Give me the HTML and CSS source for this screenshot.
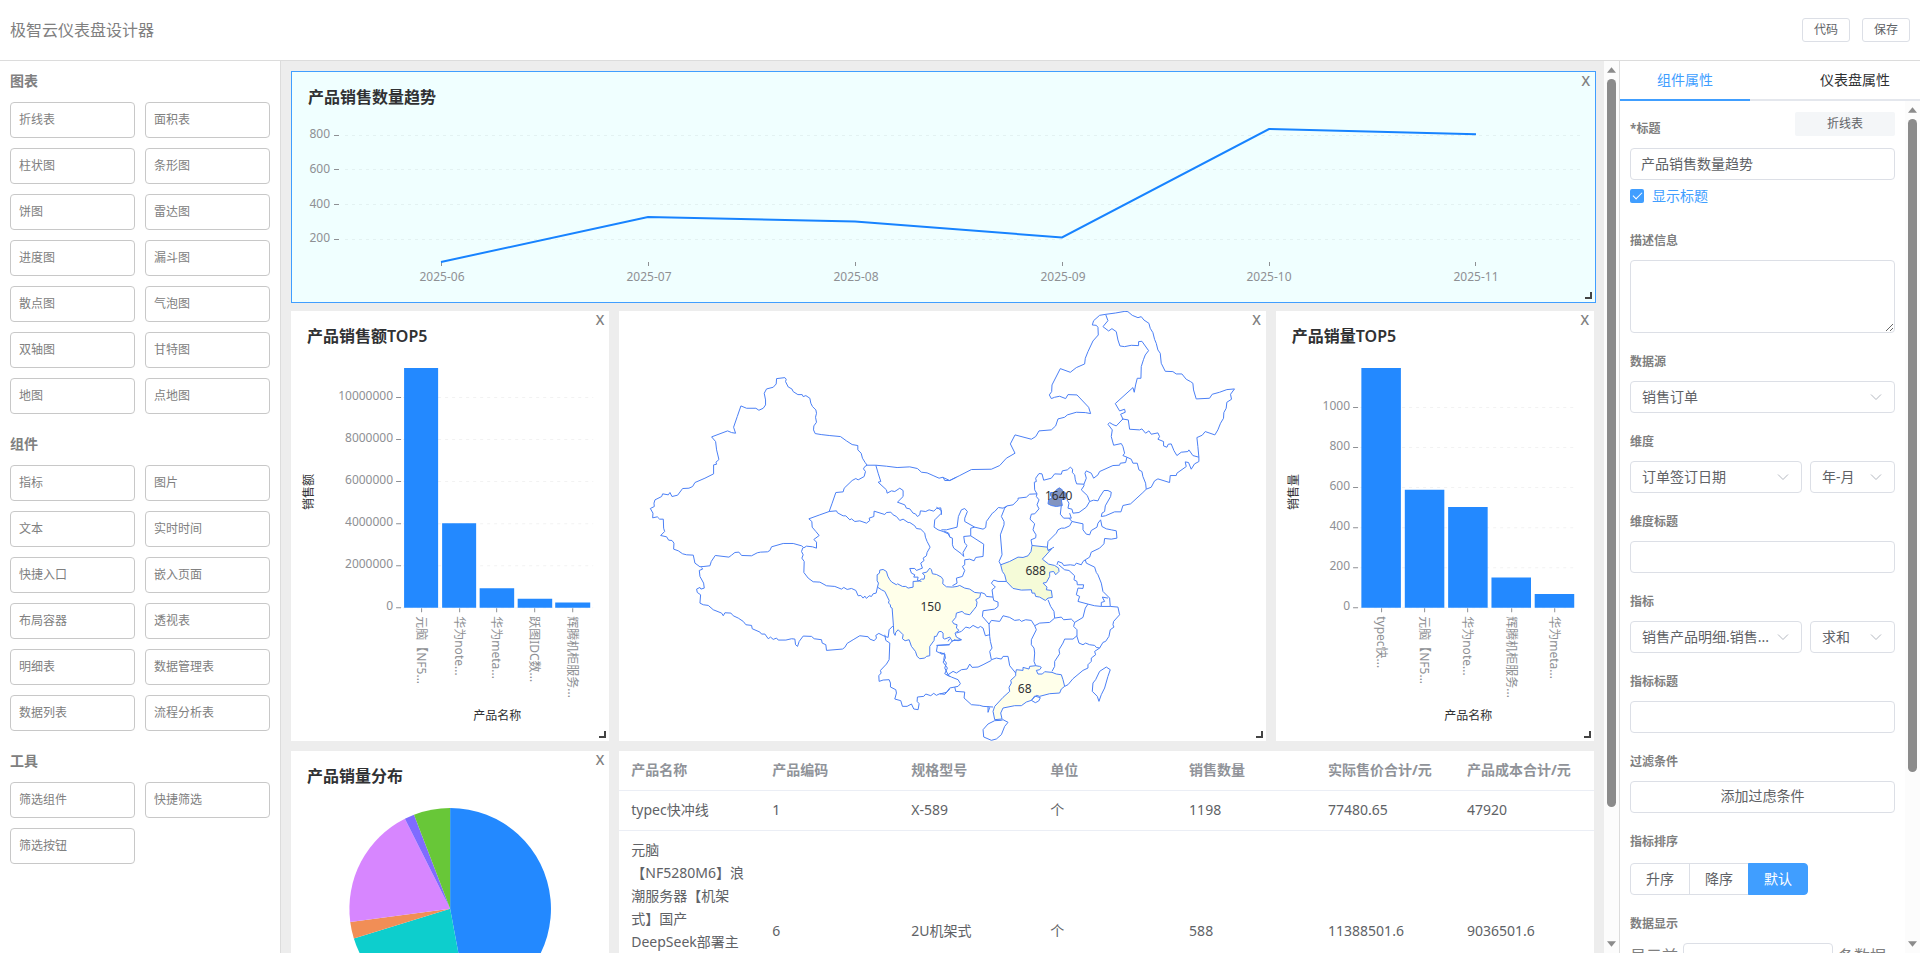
FILE: index.html
```html
<!DOCTYPE html>
<html lang="zh-CN">
<head>
<meta charset="utf-8">
<title>极智云仪表盘设计器</title>
<link rel="stylesheet" href="styles.css">
</head>
<body>
<header class="topbar">
  <h1 class="topbar-title">极智云仪表盘设计器</h1>
  <div class="topbar-actions">
    <button class="btn-small" type="button">代码</button>
    <button class="btn-small" type="button">保存</button>
  </div>
</header>
<div class="workspace">
  <nav class="palette">
    <h2 class="palette-title">图表</h2>
    <div class="palette-grid">
      <button type="button">折线表</button><button type="button">面积表</button>
      <button type="button">柱状图</button><button type="button">条形图</button>
      <button type="button">饼图</button><button type="button">雷达图</button>
      <button type="button">进度图</button><button type="button">漏斗图</button>
      <button type="button">散点图</button><button type="button">气泡图</button>
      <button type="button">双轴图</button><button type="button">甘特图</button>
      <button type="button">地图</button><button type="button">点地图</button>
    </div>
    <h2 class="palette-title">组件</h2>
    <div class="palette-grid">
      <button type="button">指标</button><button type="button">图片</button>
      <button type="button">文本</button><button type="button">实时时间</button>
      <button type="button">快捷入口</button><button type="button">嵌入页面</button>
      <button type="button">布局容器</button><button type="button">透视表</button>
      <button type="button">明细表</button><button type="button">数据管理表</button>
      <button type="button">数据列表</button><button type="button">流程分析表</button>
    </div>
    <h2 class="palette-title">工具</h2>
    <div class="palette-grid">
      <button type="button">筛选组件</button><button type="button">快捷筛选</button>
      <button type="button">筛选按钮</button>
    </div>
  </nav>

  <main class="board">
    <section class="widget widget-wide is-selected">
      <h2 class="widget-title">产品销售数量趋势</h2>
      <button class="widget-close" type="button" aria-label="删除">X</button>
      <svg class="chart" viewBox="292 114 1303 188">
        <g class="grid">
          <path d="M345 135.500H1580M345 169.500H1580M345 204.500H1580M345 239.500H1580"/>
        </g>
        <path class="tick" d="M334 135.500h5M334 169.500h5M334 204.500h5M334 239.500h5M441.500 262v4M648.500 262v4M855.500 262v4M1062.500 262v4M1269.500 262v4M1475.500 262v4"/>
        <g class="axis-label end">
          <text x="330" y="138">800</text><text x="330" y="173">600</text><text x="330" y="208">400</text><text x="330" y="242">200</text>
        </g>
        <g class="axis-label mid">
          <text x="442" y="281">2025-06</text><text x="649" y="281">2025-07</text><text x="856" y="281">2025-08</text>
          <text x="1063" y="281">2025-09</text><text x="1269" y="281">2025-10</text><text x="1476" y="281">2025-11</text>
        </g>
        <path class="trend" d="M441 262L648 217L855 221.500L1062 237.500L1269 129L1476 134.300"/>
      </svg>
      <span class="widget-resize"></span>
    </section>

    <section class="widget">
      <h2 class="widget-title">产品销售额TOP5</h2>
      <button class="widget-close" type="button" aria-label="删除">X</button>
      <svg class="chart" viewBox="291 353 318 388">
        <g class="grid"><path d="M403 397.500H593M403 439.500H593M403 481.500H593M403 523.500H593M403 565.500H593M403 607.500H593"/></g>
        <path class="tick" d="M396 397.500h5M396 439.500h5M396 481.500h5M396 523.500h5M396 565.500h5M396 607.500h5M421.500 608v4M459.500 608v4M496.500 608v4M534.500 608v4M572.500 608v4"/>
        <g class="bars">
          <path d="M404 368h34v239.500h-34zM442 523h34v84.500h-34zM479.500 588h34.500v19.500h-34.500zM517.500 598.500h34.500v9h-34.500zM555 602.300h35v5.200h-35z"/>
        </g>
        <g class="axis-label end">
          <text x="393" y="400">10000000</text><text x="393" y="442">8000000</text><text x="393" y="484">6000000</text>
          <text x="393" y="526">4000000</text><text x="393" y="568">2000000</text><text x="393" y="610">0</text>
        </g>
        <g class="axis-label">
          <text transform="translate(417 616) rotate(90)">元脑【NF5...</text>
          <text transform="translate(455 616) rotate(90)">华为note...</text>
          <text transform="translate(492 616) rotate(90)">华为meta...</text>
          <text transform="translate(530 616) rotate(90)">跃图IDC数...</text>
          <text transform="translate(568 616) rotate(90)">辉腾机柜服务...</text>
        </g>
        <g class="axis-name">
          <text transform="translate(313 492) rotate(-90)">销售额</text>
          <text x="497" y="720">产品名称</text>
        </g>
      </svg>
      <span class="widget-resize"></span>
    </section>

    <section class="widget">
      <button class="widget-close" type="button" aria-label="删除">X</button>
      <svg class="chart" viewBox="0 0 647 430">
        <g class="map" transform="translate(1 -11) scale(.33333)">
          <!-- 四川 -->
          <path class="lv1" d="M773 862L776 850 772 843 772 825 779 820 780 811 790 809 800 815 804 829 810 840 816 847 830 855 833 852 848 860 858 860 865 865 880 862 880 845 897 844 905 838 913 838 915 828 908 820 921 817 930 805 935 810 938 822 950 824 965 832 970 840 969 852 980 861 998 862 1012 860 1020 857 1035 865 1050 868 1065 878 1083 880 1080 893 1068 900 1072 907 1070 920 1062 930 1050 945 1035 942 1027 935 1010 940 1008 953 998 965 1002 972 1012 975 1010 985 1018 992 1006 1000 1010 1012 1025 1020 1015 1023 1003 1020 998 1025 990 1012 975 1018 970 1015 970 1000 964 995 957 996 950 1010 944 1010 943 1022 930 1040 930 1068 920 1070 915 1075 900 1077 892 1070 887 1055 875 1040 868 1020 856 1023 848 1017 850 1005 835 990 828 998 826 1007 822 1000 821 978 817 925 812 922 812 915 806 910 808 902 795 875 785 870z"/>
          <!-- 新疆 -->
          <path d="M742 496L736 488 728 475 724 460 714 450 714 437 697 434 680 423 662 410 630 407 604 404 586 401 581 390 582 378 590 367 587 352 590 340 588 330 578 320 573 310 570 295 558 287 550 290 547 284 534 284 520 275 516 267 505 261 497 245 499 238 495 233 470 236 469 252 460 262 440 267 433 280 437 300 437 315 430 325 417 331 408 325 380 325 363 318 352 350 341 382 347 400 335 398 323 393 275 411 287 425 290 450 297 479 288 487 290 493 281 495 281 522 255 535 225 548 218 560 207 565 188 566 173 586 156 590 150 578 145 585 128 582 125 590 105 600 102 610 103 620 91 626 99 640 98 654 112 651 119 658 130 658 131 685 134 695 122 707 140 711 146 721 156 722 162 730 161 748 175 753 188 762 200 765 220 766 225 790 240 801 252 800 270 798 274 785 286 767 327 772 335 766 345 758 357 757 365 767 395 768 412 759 422 757 443 756 450 752 455 741 490 731 520 731 545 738 552 744 560 739 578 741 590 745 590 727 582 719 598 707 588 695 577 682 576 665 567 657 600 645 628 635 637 610 648 578 670 576 673 565 697 542 708 536 715 540 733 530 737 515 731 507 735 500 742 496"/>
          <!-- 西藏 -->
          <path d="M245 803L248 808 238 812 240 830 251 850 253 865 243 868 240 863 230 868 232 878 242 885 240 910 250 915 265 917 280 930 305 940 310 948 315 939 333 940 340 948 355 955 370 965 378 975 395 977 397 987 420 997 425 1003 435 1003 445 1017 452 1012 460 1019 470 1015 475 1021 498 1021 515 1017 525 1018 527 1035 533 1040 538 1025 550 1009 575 1010 583 1017 605 1020 607 1030 618 1035 620 1052 668 1048 675 1043 682 1031 700 1020 720 1008 745 1011 750 1018 763 1023 770 1015 768 1007 777 1001 795 1010 805 1013 808 990 820 978"/>
          <!-- 青海 -->
          <path d="M549 744L545 755 550 765 546 775 553 785 552 818 565 835 580 846 600 847 620 858 645 860 665 868 672 863 682 869 695 866 708 872 715 888 723 887 730 895 735 889 740 896 748 888 755 890 760 882 769 880 773 862M628 635L650 633 653 639 670 648 678 648 690 660 695 657 705 665 720 663 740 670 750 662 748 655 762 650 763 634 795 644 800 638 813 637 820 645 830 650 840 662 850 658 865 668 870 668 885 678 890 686 903 688 915 700 917 712 922 725 931 742 922 758 920 768 910 775 913 782 903 790 908 805 890 812 885 806 870 806 875 820 885 825 882 832 895 832 893 842 905 845"/>
          <!-- 甘肃、内蒙古西段 -->
          <path d="M742 496L768 496 800 499 832 503 870 501 893 506 905 517 922 519 940 527 958 535 970 532 975 542 990 542 1010 532M768 496L775 520 783 545 775 547 800 570 802 580 815 573 825 575 840 565 850 572 850 590 833 607 855 615 860 625 870 627 880 640 887 642 893 650 900 645 902 633 918 635 928 630 942 634 950 626 963 624 965 640 945 660 943 682 955 690 970 695 985 702 990 710"/>
          <!-- 云南 -->
          <path d="M795 1005L798 1022 810 1030 808 1080 800 1093 782 1112 784 1120 777 1128 778 1145 790 1141 808 1140 812 1150 812 1162 828 1170 830 1180 825 1198 843 1203 848 1220 862 1220 875 1213 882 1228 895 1230 898 1212 892 1205 893 1192 912 1190 918 1183 933 1188 942 1181 950 1187 960 1182 975 1184 990 1168M990 1017L985 1025M990 1035L953 1037 950 1055 965 1062 975 1063 977 1075 970 1087 983 1105 975 1122 990 1130"/>
        </g>
        <g class="map" transform="translate(321 -11) scale(.33333)">
          <!-- 河南 -->
          <path class="lv2" d="M183 795L210 785 235 772 250 773 265 768 274 755 277 737 323 742 325 752 335 748 308 778 327 793 345 797 357 805 358 815 348 825 342 815 330 817 330 830 320 848 310 850 322 862 320 870 335 872 338 893 325 895 317 902 300 892 288 890 285 880 277 880 275 870 245 871 220 866 200 845 195 825 188 815z"/>
          <!-- 广东 -->
          <path class="lv1" d="M228 1120L230 1110 250 1112 250 1103 268 1108 270 1100 288 1098 300 1100 305 1103 300 1110 290 1112 295 1123 308 1123 315 1116 337 1118 350 1123 365 1125 370 1140 375 1160 365 1168 360 1180 330 1182 300 1190 290 1187 275 1202 260 1207 245 1218 225 1218 190 1225 183 1240 187 1258 165 1260 160 1235 165 1220 190 1193 210 1175 208 1163 215 1150 213 1142 228 1128z"/>
          <!-- 北京 -->
          <path class="lv3" d="M325 612L327 600 337 594 332 586 333 578 345 578 350 570 359 564 368 570 368 577 380 580 378 597 365 600 368 617 350 620 335 617z"/>
          <!-- 国界与东北 -->
          <path d="M10 533L30 542 60 527 95 509 155 508 180 497 200 475 226 460 212 432 226 405 275 418 288 410 298 393 335 390 348 378 355 357 375 352 383 345 410 337 437 338 453 341 447 322 412 285 385 284 378 296 360 289 345 292 335 296 329 285 336 275 337 255 362 206 392 217 410 203 435 192 437 175 445 155 460 123 476 105 475 82 470 76 458 75 462 62 480 46 498 43 528 39 556 34 565 35 578 46 595 53 605 50 613 60 628 70 632 85 640 98 645 118 650 130 655 150 662 160 665 190 677 214 700 215 710 222 727 222 740 238 753 245 760 250 762 270 770 297 810 295 818 283 840 277 862 269 885 267 873 283 876 298 862 307 860 325 853 338 852 355 843 370 835 390 826 405 797 395 788 406 772 413 775 440 778 472 778 485 765 492 755 508 747 488 737 486 740 500 712 520 710 527 692 527 690 548 655 537 645 543 635 562 620 568 610 578 573 612 550 617 544 636 525 636 497 648 485 650 487 640 495 635 497 618 513 590 515 577 505 572 493 572 480 592 475 603 462 601 450 605 440 622 418 638 400 640 397 628 385 625 388 610 382 600"/>
          <path d="M498 43L505 62 490 80 507 93 517 86 530 95 535 120 541 138 555 140 575 136 597 137 597 125 607 124 627 152 617 165 612 178 605 200 604 235 593 235 588 255 584 277 580 263 527 311 540 333 555 328 557 337 543 343 550 357 530 378 520 374 510 368 505 373 518 390 515 410 522 436 545 431 550 440 555 460 550 467 562 472M547 357L566 360 570 388 600 390 607 387 618 400 628 393 635 403 655 399 660 410 655 418 672 425 672 438 682 442 686 433 695 432 703 452 712 467 725 457 745 455 748 450 760 467 778 472M562 472L575 478 580 490 593 490 598 510 607 515 610 530 618 550 620 568M562 472L558 488 542 490 540 496 520 497 480 515 475 525 462 535 455 520 440 513 436 520 440 535 433 553 433 558 425 570 443 587 450 605"/>
          <!-- 华北 -->
          <path d="M433 553L411 552 407 540 405 525 398 518 399 508 392 502 383 510 368 513 365 523 345 522 335 535 312 541 307 522 298 521 288 535 290 545 284 547 285 570 292 582 290 590 298 600 292 615 298 627 285 642 275 643 271 658 285 672 280 690 289 705 288 714 274 720 277 737M323 742L325 725 350 700 355 690 365 685 375 685 390 678 397 665 388 655 372 655 362 643 365 617M390 640L395 655 388 655M203 618L220 615 235 600 235 595 260 592 270 583 292 582M203 618L195 625 185 650 193 665 193 675 182 705 187 765 178 785 183 795M203 618L190 625 176 623 165 635 158 640 140 665 138 683 130 688 105 682 75 665 75 655 83 635 75 626 65 630 56 650 52 682 20 690 5 690M13 694L27 700 30 712 38 715 38 735 42 745 65 762 72 770 70 758 82 737 75 730 72 710 93 708 93 685 105 682M93 708L132 733 130 770 108 773 103 783 90 778 75 780 75 795 68 800 75 812 68 830 50 835 52 850 38 858M-10 622L5 632 5 645"/>
          <!-- 华东 -->
          <path d="M397 665L430 672 430 690 440 703 450 705 455 692 472 682 475 670 483 660 487 680 500 687 515 690 530 693 532 715 515 718 495 716 493 732 480 745 455 757 450 772 437 780 440 790 465 802 470 818 475 825 485 850 490 875 510 895 512 920 485 920 485 908 495 905 488 892 505 895M352 795L355 785 368 790 372 797 392 795 405 797 410 790 425 795 430 785 437 780M357 795L375 810 388 812 405 828 403 840 412 845 413 855 432 855 430 866 415 865 410 885 420 890 415 905 445 913 465 918 485 920M343 742L325 752M512 920L535 922 540 945 522 965 520 975 523 982 512 990 508 1010 498 1025 490 1028 480 1045 470 1043 465 1037 450 1035 438 1030 430 1035 418 1030 412 1010 412 990 402 980 405 968 430 953 437 925 445 913M345 955L365 952 372 960 395 958 405 968M412 1008L400 1018 375 1018 370 1030 358 1050 360 1062 345 1085 345 1100 337 1115M480 1045L465 1055 468 1065 455 1075 455 1085 445 1095 445 1105 430 1112 400 1137 385 1155 375 1160M500 1102L512 1110 505 1130 495 1165 485 1185 478 1205 473 1190 458 1175 460 1150 468 1140 480 1115z"/>
          <!-- 华中、西南 -->
          <path d="M123 878L135 882 140 890 160 892 157 870 167 862 155 850 162 841 175 845 200 845M160 892L162 902 175 907 175 920 165 928 130 933 128 950 148 973 155 962 180 965 190 948 210 953 225 962 240 960 245 965 258 960 275 962 285 978 300 970 330 968 345 955M325 900L333 920 343 935 345 955M285 978L290 990 275 1020 275 1035 283 1045 285 1060 283 1085 288 1098M148 973L150 1010 152 1025 157 1045 150 1055 155 1080 170 1075 185 1078 190 1070 205 1070 210 1098 228 1120M150 1005L137 1008 130 985 122 980 115 985 100 977 90 985 78 982 65 995 50 1000M65 1020L38 1023 28 1035 -10 1037M15 1060L5 1063M0 1058L15 1063 12 1080 20 1090 15 1105 25 1125 40 1115 50 1120 65 1110 82 1108 90 1093 97 1103 115 1102 130 1095 155 1082M20 1125L35 1132 55 1140 62 1152 55 1160 45 1162 30 1165 20 1178 0 1183M45 1162L48 1175 75 1177 73 1195 95 1215 120 1217 130 1220 160 1222M145 1220v18l5 -15"/>
          <!-- 海南、港澳 -->
          <path d="M165 1263L185 1262 190 1260 205 1268 195 1280 185 1305 170 1318 155 1322 132 1312 130 1290 145 1273zM275 1202l10 -13 17 5 -5 10 -10 5z"/>
        </g>
        <g class="map-label">
          <text x="312" y="300">150</text><text x="417" y="264">688</text><text x="440" y="189">1640</text><text x="406" y="382">68</text>
        </g>
      </svg>
      <span class="widget-resize"></span>
    </section>

    <section class="widget">
      <h2 class="widget-title">产品销量TOP5</h2>
      <button class="widget-close" type="button" aria-label="删除">X</button>
      <svg class="chart" viewBox="1276 353 318 388">
        <g class="grid"><path d="M1360 407.500H1577M1360 447.500H1577M1360 487.500H1577M1360 527.500H1577M1360 567.500H1577M1360 607.500H1577"/></g>
        <path class="tick" d="M1353 407.500h5M1353 447.500h5M1353 487.500h5M1353 527.500h5M1353 567.500h5M1353 607.500h5M1381.500 608v4M1424.500 608v4M1467.500 608v4M1511.500 608v4M1554.500 608v4"/>
        <g class="bars">
          <path d="M1361.300 368h39.500v239.500h-39.500zM1404.700 489.700h39.500v117.800h-39.500zM1448 507h39.500v100.500h-39.500zM1491.300 577.300h39.500v30.200h-39.500zM1534.500 593.700h39.500v13.800h-39.500z"/>
        </g>
        <g class="axis-label end">
          <text x="1350" y="410">1000</text><text x="1350" y="450">800</text><text x="1350" y="490">600</text>
          <text x="1350" y="530">400</text><text x="1350" y="570">200</text><text x="1350" y="610">0</text>
        </g>
        <g class="axis-label">
          <text transform="translate(1377 616) rotate(90)">typec快...</text>
          <text transform="translate(1420 616) rotate(90)">元脑【NF5...</text>
          <text transform="translate(1463 616) rotate(90)">华为note...</text>
          <text transform="translate(1507 616) rotate(90)">辉腾机柜服务...</text>
          <text transform="translate(1550 616) rotate(90)">华为meta...</text>
        </g>
        <g class="axis-name">
          <text transform="translate(1298 492) rotate(-90)">销售量</text>
          <text x="1468" y="720">产品名称</text>
        </g>
      </svg>
      <span class="widget-resize"></span>
    </section>

    <section class="widget">
      <h2 class="widget-title">产品销量分布</h2>
      <button class="widget-close" type="button" aria-label="删除">X</button>
      <svg class="chart" viewBox="291 793 318 388">
        <g class="pie" transform="translate(450 908.700)">
          <path fill="#2389ff" d="M0 0V-100.700A100.700 100.700 0 0 1 18.500 99z"/>
          <path fill="#0dcecd" d="M0 0L18.500 99A100.700 100.700 0 0 1 -96.200 29.800z"/>
          <path fill="#f18e56" d="M0 0L-96.200 29.800A100.700 100.700 0 0 1 -99.800 13.100z"/>
          <path fill="#d786ff" d="M0 0L-99.800 13.100A100.700 100.700 0 0 1 -45.200 -90z"/>
          <path fill="#7f6bff" d="M0 0L-45.200 -90A100.700 100.700 0 0 1 -36.100 -94z"/>
          <path fill="#68c738" d="M0 0L-36.100 -94A100.700 100.700 0 0 1 0 -100.700z"/>
        </g>
      </svg>
    </section>

    <section class="widget widget-table">
      <table class="data-table">
        <thead>
          <tr><th class="col-name">产品名称</th><th>产品编码</th><th>规格型号</th><th>单位</th><th>销售数量</th><th>实际售价合计/元</th><th>产品成本合计/元</th></tr>
        </thead>
        <tbody>
          <tr><td>typec快冲线</td><td>1</td><td>X-589</td><td>个</td><td>1198</td><td>77480.65</td><td>47920</td></tr>
          <tr class="row-tall"><td>元脑<br>【NF5280M6】浪<br>潮服务器【机架<br>式】国产<br>DeepSeek部署主</td><td>6</td><td>2U机架式</td><td>个</td><td>588</td><td>11388501.6</td><td>9036501.6</td></tr>
        </tbody>
      </table>
    </section>
  </main>

  <div class="scrollbar" aria-hidden="true">
    <svg viewBox="0 0 10 6"><path d="M5 0L10 6H0z"/></svg>
    <div class="scroll-track board-thumb"><i></i></div>
    <svg viewBox="0 0 10 6"><path d="M0 0H10L5 6z"/></svg>
  </div>

  <aside class="inspector">
    <div class="tabs">
      <button class="tab is-active" type="button">组件属性</button>
      <button class="tab" type="button">仪表盘属性</button>
    </div>
    <div class="inspector-body">
      <form class="form">
        <div class="field field-first">
          <div class="field-head">
            <label class="field-label" for="f-title">*标题</label>
            <span class="tag">折线表</span>
          </div>
          <input class="control" id="f-title" type="text" value="产品销售数量趋势">
          <label class="check"><input type="checkbox" checked><span>显示标题</span></label>
        </div>
        <div class="field">
          <label class="field-label" for="f-desc">描述信息</label>
          <textarea class="control control-area" id="f-desc"></textarea>
        </div>
        <div class="field">
          <label class="field-label" for="f-source">数据源</label>
          <div class="select"><select class="control" id="f-source"><option>销售订单</option></select><svg viewBox="0 0 12 8"><path d="M1 1.500L6 6.500 11 1.500"/></svg></div>
        </div>
        <div class="field">
          <label class="field-label" for="f-dim">维度</label>
          <div class="pair">
            <div class="select"><select class="control" id="f-dim"><option>订单签订日期</option></select><svg viewBox="0 0 12 8"><path d="M1 1.500L6 6.500 11 1.500"/></svg></div>
            <div class="select select-short"><select class="control" aria-label="日期粒度"><option>年-月</option></select><svg viewBox="0 0 12 8"><path d="M1 1.500L6 6.500 11 1.500"/></svg></div>
          </div>
        </div>
        <div class="field">
          <label class="field-label" for="f-dimtitle">维度标题</label>
          <input class="control" id="f-dimtitle" type="text">
        </div>
        <div class="field">
          <label class="field-label" for="f-metric">指标</label>
          <div class="pair">
            <div class="select"><select class="control" id="f-metric"><option>销售产品明细.销售...</option></select><svg viewBox="0 0 12 8"><path d="M1 1.500L6 6.500 11 1.500"/></svg></div>
            <div class="select select-short"><select class="control" aria-label="汇总方式"><option>求和</option></select><svg viewBox="0 0 12 8"><path d="M1 1.500L6 6.500 11 1.500"/></svg></div>
          </div>
        </div>
        <div class="field">
          <label class="field-label" for="f-metrictitle">指标标题</label>
          <input class="control" id="f-metrictitle" type="text">
        </div>
        <div class="field">
          <span class="field-label">过滤条件</span>
          <button class="control control-button" type="button">添加过虑条件</button>
        </div>
        <div class="field">
          <span class="field-label">指标排序</span>
          <div class="segmented" role="radiogroup" aria-label="指标排序">
            <label><input type="radio" name="sort"><span>升序</span></label>
            <label><input type="radio" name="sort"><span>降序</span></label>
            <label><input type="radio" name="sort" checked><span>默认</span></label>
          </div>
        </div>
        <div class="field">
          <label class="field-label" for="f-limit">数据显示</label>
          <div class="limit"><span>显示前</span><input class="control" id="f-limit" type="text"><span>条数据</span></div>
        </div>
      </form>
      <div class="scrollbar" aria-hidden="true">
        <svg viewBox="0 0 10 6"><path d="M5 0L10 6H0z"/></svg>
        <div class="scroll-track form-thumb"><i></i></div>
        <svg viewBox="0 0 10 6"><path d="M0 0H10L5 6z"/></svg>
      </div>
    </div>
  </aside>
</div>
</body>
</html>
```

FILE: styles.css
```css
* { box-sizing: border-box; }
body {
  margin: 0;
  height: 100vh;
  display: flex;
  flex-direction: column;
  overflow: hidden;
  background: #fff;
  color: #606266;
  font-family: "Noto Sans", "Noto Sans CJK SC", sans-serif;
  font-size: 14px;
  text-spacing-trim: space-all;
}
button, input, select, textarea { font: inherit; color: inherit; margin: 0; }
button { cursor: pointer; }
h1, h2 { margin: 0; }

.topbar {
  flex: none;
  height: 61px;
  padding: 0 10px;
  display: flex;
  align-items: center;
  justify-content: space-between;
  border-bottom: 1px solid #dcdcdc;
}
.topbar-title { padding-bottom: 2px; font-size: 16px; font-weight: 400; color: gray; }
.topbar-actions { display: flex; gap: 12px; }
.btn-small {
  height: 24px;
  padding: 0 11px;
  border: 1px solid #dcdfe6;
  border-radius: 3px;
  background: #fff;
  font-size: 12px;
  line-height: 20px;
}

.workspace { flex: 1; min-height: 0; display: flex; }

.palette {
  flex: none;
  width: 281px;
  padding: 0 10px;
  border-right: 1px solid #dcdcdc;
  color: gray;
}
.palette-title { padding-bottom: 2px; font-size: 14px; line-height: 39px; font-weight: 700; }
.palette-grid {
  display: grid;
  grid-template-columns: 1fr 1fr;
  gap: 10px;
  padding-bottom: 10px;
}
.palette-grid button {
  height: 36px;
  padding: 0 8px 2px;
  border: 1px solid #c8c8c8;
  border-radius: 4px;
  background: #fff;
  font-size: 12px;
  text-align: left;
}

.board {
  flex: 1;
  min-width: 0;
  padding: 10px;
  background: #ededed;
  display: grid;
  grid-template-columns: repeat(4, minmax(0, 1fr));
  grid-template-rows: 230px 430px 430px;
  gap: 10px;
  overflow: hidden;
}
.widget { position: relative; background: #fff; overflow: hidden; }
.widget:nth-child(3) { grid-column: span 2; }
.widget-wide { grid-column: 1 / -1; }
.widget-table { grid-column: span 3; }
.is-selected {
  margin: 0 -2px -2px 0;
  background: #f0ffff;
  border: 1px solid #409eff;
}
.widget-title {
  padding: 8px 16px 0;
  font-size: 16px;
  line-height: 34px;
  font-weight: 600;
  color: #303133;
}
.widget-close {
  position: absolute;
  top: 0;
  right: 5px;
  padding: 0;
  border: 0;
  background: none;
  color: gray;
  font-size: 14px;
  line-height: 18px;
  font-weight: 500;
}
.widget-resize {
  position: absolute;
  right: 3px;
  bottom: 3px;
  width: 7px;
  height: 7px;
  border: solid #444;
  border-width: 0 2px 2px 0;
}

.chart { display: block; width: 100%; height: auto; font-size: 12px; }
.grid path { stroke: #1d2129; stroke-opacity: .06; stroke-dasharray: 3 4; fill: none; }
.tick { stroke: #8e9094; fill: none; }
.axis-label { fill: #8e9094; }
.end { text-anchor: end; }
.mid, .axis-name { text-anchor: middle; }
.axis-name { fill: #303133; }
.trend { stroke: #1783ff; stroke-width: 2; fill: none; }
.bars path { fill: #2389ff; }
.map path { fill: none; stroke: #4a80f5; stroke-width: 3; stroke-linejoin: round; }
.map .lv1 { fill: #ffffea; }
.map .lv2 { fill: #f5fbd8; }
.map .lv3 { fill: #8294c0; }
.map-label { text-anchor: middle; fill: #303133; }

.data-table { width: 100%; table-layout: fixed; border-collapse: separate; border-spacing: 0; }
.data-table th, .data-table td {
  padding: 7px 12px 9px;
  border-bottom: 1px solid #ebeef5;
  font-size: 14px;
  line-height: 23px;
  text-align: left;
  white-space: nowrap;
}
.data-table th { color: #909399; font-weight: 700; }
.data-table .col-name { width: 141px; }
.row-tall { height: 201px; }
.row-tall td:first-child { vertical-align: top; }

.scrollbar {
  flex: none;
  width: 15px;
  padding: 6px 3px;
  background: #fcfcfc;
  display: flex;
  flex-direction: column;
  gap: 6px;
}
.scrollbar svg { display: block; width: 9px; height: 6px; fill: #8b8b8b; }
.scroll-track { flex: 1; min-height: 0; }
.scroll-track i { display: block; border-radius: 5px; background: #8b8b8b; }
.board-thumb i { height: 85%; }
.form-thumb i { height: 80%; }

.inspector {
  flex: none;
  width: 301px;
  border-left: 1px solid #dcdcdc;
  display: flex;
  flex-direction: column;
}
.tabs { flex: none; display: flex; justify-content: space-between; height: 40px; box-shadow: inset 0 -2px #e4e7ed; }
.tab {
  width: 130px;
  padding: 0 0 2px;
  border: 0;
  background: none;
  color: #303133;
  line-height: 38px;
}
.tab.is-active { color: #409eff; box-shadow: inset 0 -2px #409eff; }
.inspector-body { flex: 1; min-height: 0; display: flex; }
.form { flex: 1; min-width: 0; padding: 0 10px; overflow: hidden; }
.field { padding-top: 10px; }
.field-first { padding-top: 9px; }
.field-head { display: flex; justify-content: space-between; align-items: flex-start; }
.field-label { display: block; font-size: 12px; line-height: 38px; font-weight: 700; color: gray; }
.tag {
  width: 100px;
  margin-top: 2px;
  border-radius: 2px;
  background: #f4f6f8;
  font-size: 12px;
  line-height: 24px;
  text-align: center;
}
.control {
  display: block;
  width: 100%;
  height: 32px;
  padding: 0 10px 2px;
  border: 1px solid #dcdfe6;
  border-radius: 4px;
  background: #fff;
  outline: none;
}
.control-area { height: 73px; resize: vertical; }
.control-button { line-height: 28px; }
.check { display: flex; align-items: center; gap: 8px; height: 32px; color: #409eff; }
.check span { padding-bottom: 2px; }
.check input {
  appearance: none;
  width: 14px;
  height: 14px;
  border-radius: 2px;
  background: #409eff;
  display: grid;
  place-items: center;
}
.check input::after {
  content: "";
  width: 8px;
  height: 4px;
  border: solid #fff;
  border-width: 0 0 1px 1px;
  transform: rotate(-45deg);
  margin-bottom: 3px;
}
.pair { display: flex; gap: 8px; }
.select { position: relative; flex: 1; min-width: 0; }
.select-short { flex: 0 0 85px; }
.select select { appearance: none; padding: 0 25px 0 11px; line-height: 28px; }
.select svg {
  position: absolute;
  right: 13px;
  top: 12px;
  width: 12px;
  height: 8px;
  fill: none;
  stroke: #b4b8c0;
  pointer-events: none;
}
.segmented { display: flex; padding-top: 2px; }
.segmented input { position: absolute; opacity: 0; }
.segmented span {
  display: block;
  width: 60px;
  height: 32px;
  margin-right: -1px;
  border: 1px solid #dcdfe6;
  line-height: 30px;
  text-align: center;
}
.segmented label:first-child span { border-radius: 4px 0 0 4px; }
.segmented label:last-child span { border-radius: 0 4px 4px 0; margin: 0; }
.segmented input:checked + span { background: #409eff; border-color: #409eff; color: #fff; }
.limit { display: flex; align-items: flex-start; gap: 5px; font-size: 16px; line-height: 26px; color: gray; }
.limit .control { width: 150px; }
.limit span { white-space: nowrap; }
```
